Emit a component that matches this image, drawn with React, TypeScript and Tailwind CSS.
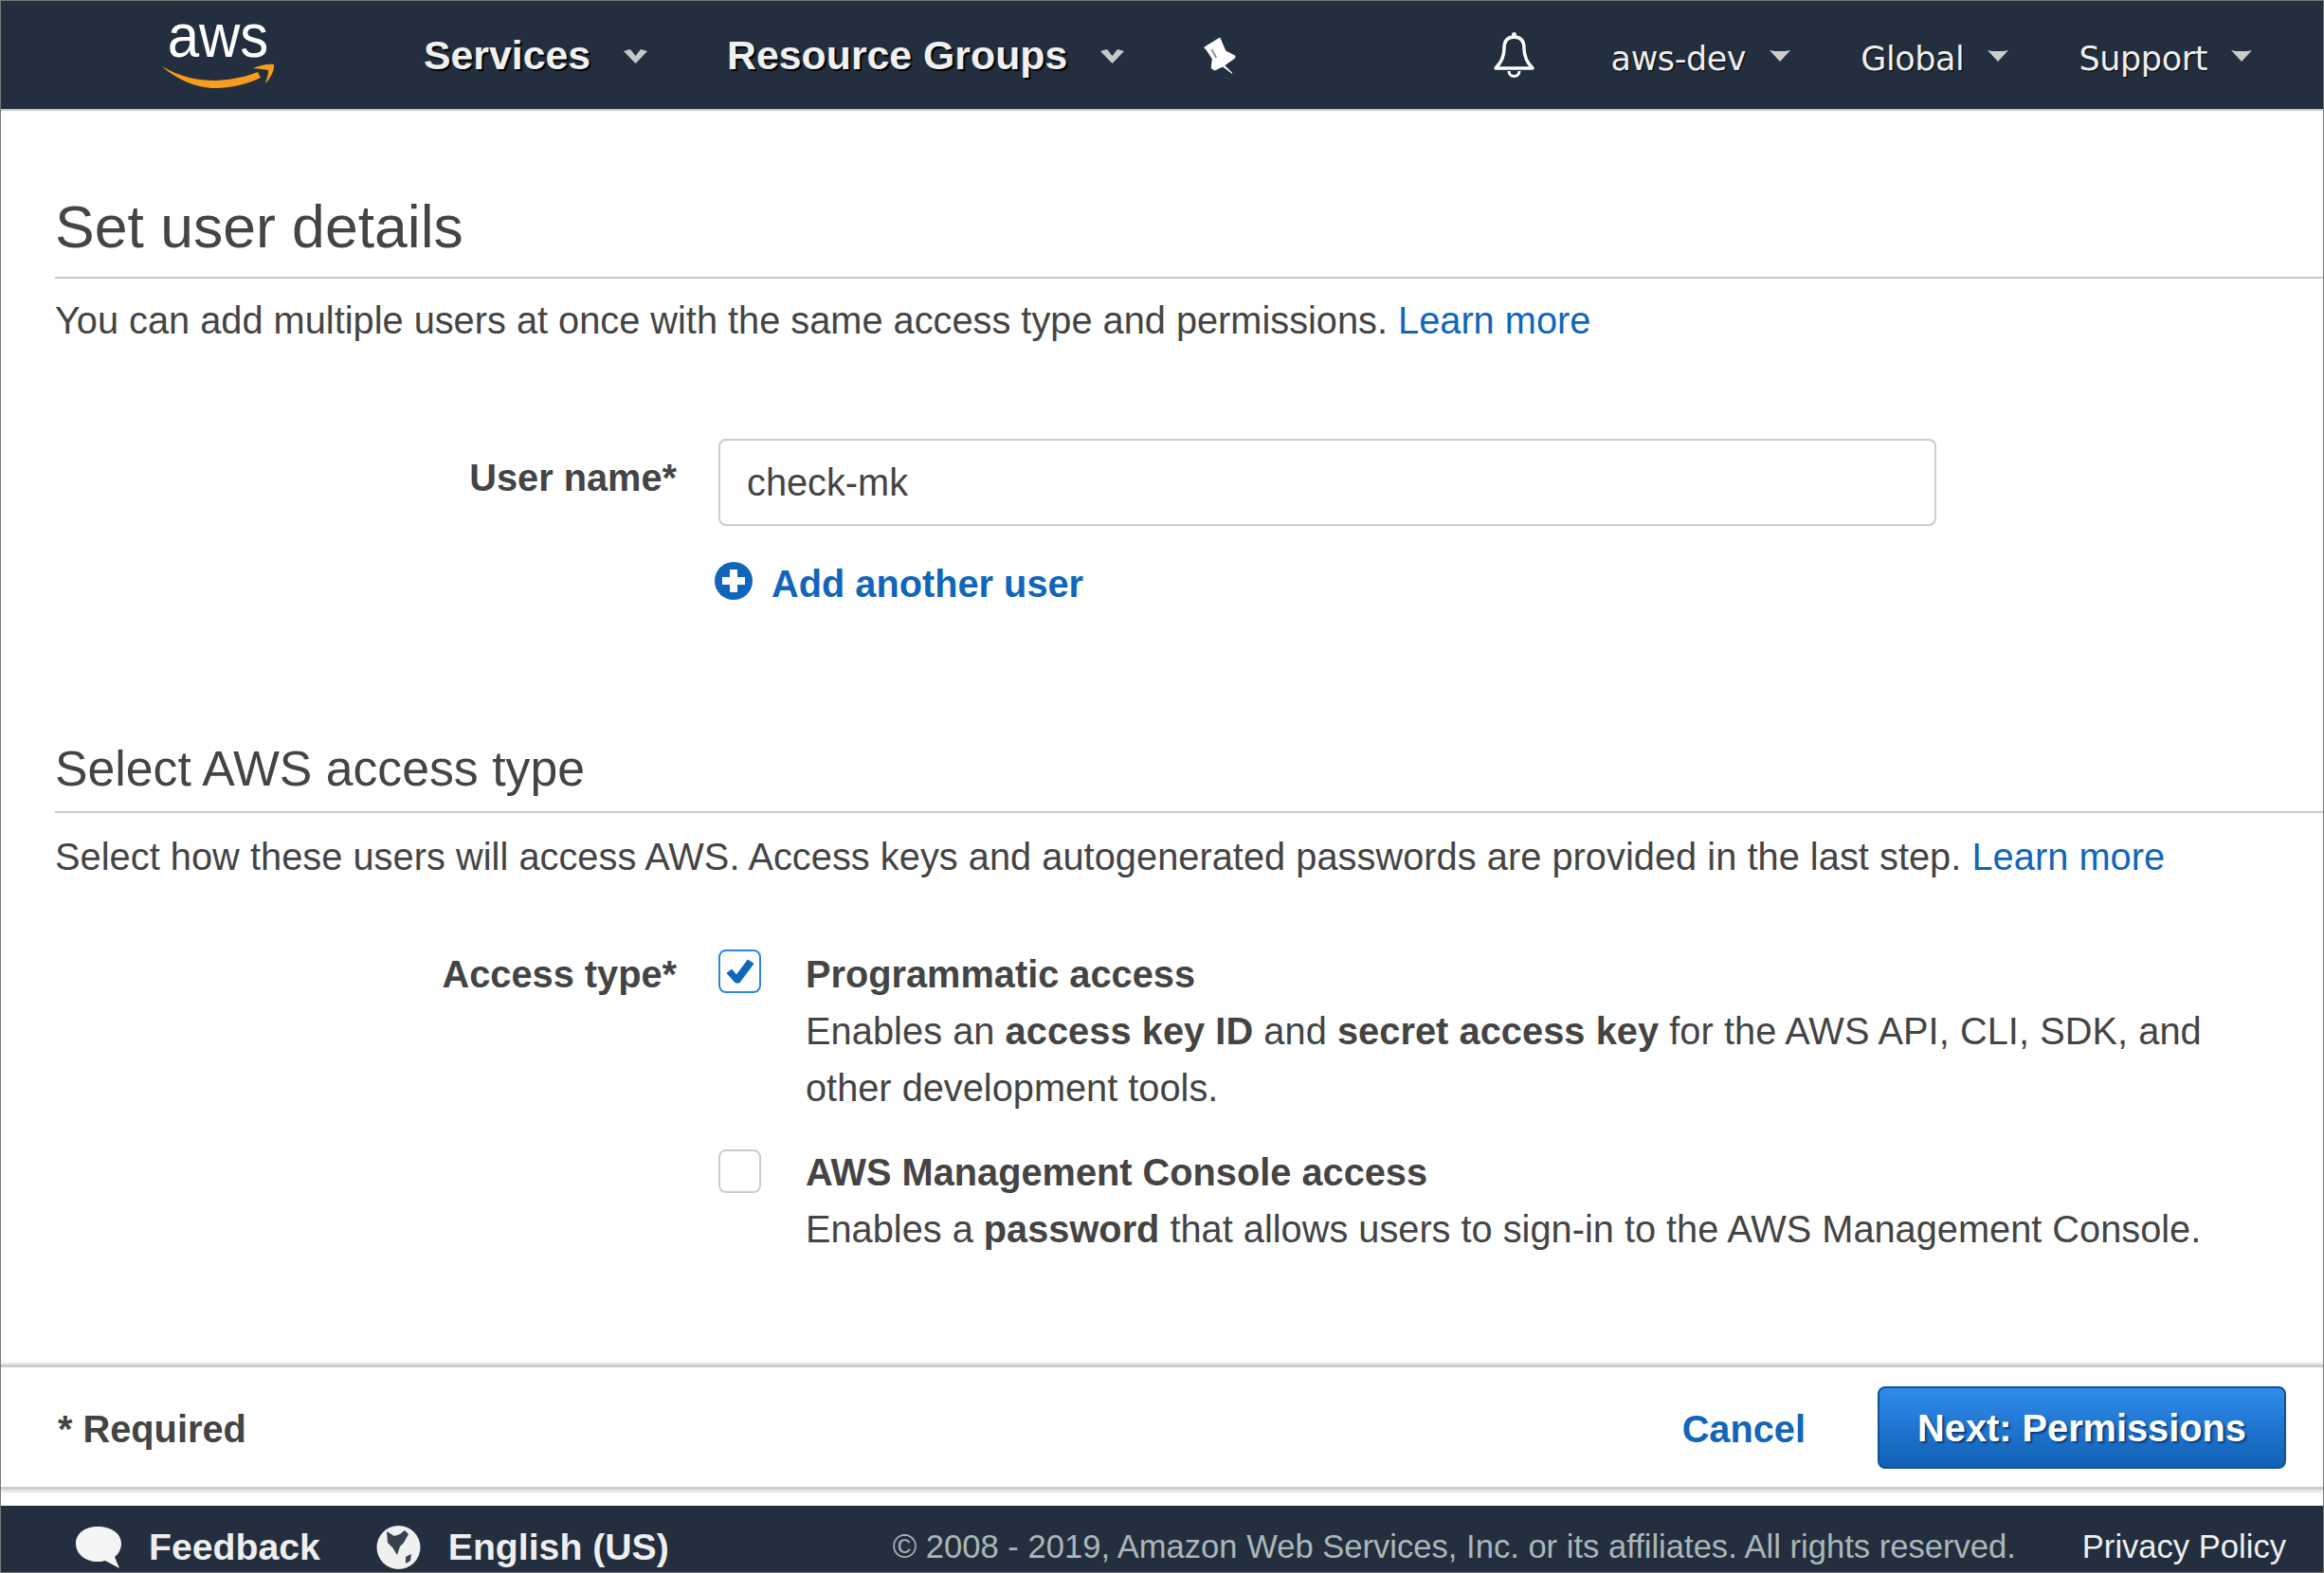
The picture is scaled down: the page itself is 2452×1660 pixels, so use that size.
import React from "react";

const NavTriangle = () => (
  <svg width="22" height="12" viewBox="0 0 22 12" className="ml-[25px] mt-[2px] shrink-0">
    <path d="M0 0l5 1h12l5-1-11 12z" fill="#ccc" />
  </svg>
);

const BoldCaret = () => (
  <svg width="25" height="15" viewBox="0 0 25 15" className="ml-[35px] mt-[3px] shrink-0">
    <path d="M0 2l7-2 5.5 7L18 0l7 2-12.5 13z" fill="#c4c8cc" />
  </svg>
);

const AwsLogo = () => (
  <div className="flex flex-col items-center w-[118px] shrink-0">
    <span className="-mt-[16px] -mb-[1px] text-[60px] leading-[60px] text-white scale-y-[1.09]">aws</span>
    <svg width="118" height="26" viewBox="0 0 118 26">
      <path d="M0 3C18 14 38 18 56 18C72 18 88 14 101 9L104 15C90 22 72 26 56 26C36 26 14 16 0 3Z" fill="#f79c1d" />
      <path d="M96 5C103 2 112 0 118 1C119 7 114 16 109 21C110 16 113 10 112 7C108 6 102 6 96 5Z" fill="#f79c1d" />
    </svg>
  </div>
);

const Checkbox = ({ checked }: { checked?: boolean }) => (
  <div
    className={
      checked
        ? "w-[45px] h-[46px] shrink-0 rounded-[8px] border-2 border-[#2e86e0] flex items-center justify-center"
        : "w-[45px] h-[46px] shrink-0 rounded-[8px] border-2 border-[#ccc]"
    }
  >
    {checked && (
      <svg width="30" height="26" viewBox="0 0 30 26">
        <path d="M1 15l5-4 5 6L23 1l6 4-15 20h-4z" fill="#1166bb" stroke="#1166bb" strokeLinejoin="round" />
      </svg>
    )}
  </div>
);

export default function App() {
  return (
    <div className="w-[2452px] h-[1660px] flex flex-col bg-white border-l border-r border-[#777] overflow-hidden text-[#444] font-['Liberation_Sans',sans-serif]">
      {/* top nav */}
      <div className="h-[117px] shrink-0 bg-[#232f3e] border-t border-t-[#777] border-b-2 border-b-[#ccc] flex items-center pl-[170px] pr-[75px]">
        <AwsLogo />
        <div className="ml-[158px] flex items-center text-[42.8px] font-bold text-[#f0f0f0] [text-shadow:2px_2px_1px_#000]">
          Services
          <BoldCaret />
        </div>
        <div className="ml-[84px] flex items-center text-[42.8px] font-bold text-[#f0f0f0] [text-shadow:2px_2px_1px_#000]">
          Resource Groups
          <BoldCaret />
        </div>
        <svg width="34" height="39" viewBox="0 0 34 39" className="ml-[84px] shrink-0">
          <path d="M0.7 11L17 1L19 5.7L23 15L33 20L32.7 22.3L21.7 30L30 38.3L20 31L11.7 35L8.3 33L9.3 23L3.3 14Z" fill="#fff" stroke="#fff" strokeLinejoin="round" />
          <path d="M8.3 13L13.3 22" stroke="#8c939b" strokeWidth="2" />
        </svg>
        <div className="ml-auto flex items-center text-[35px] text-[#eee] [text-shadow:1px_1px_1px_#000] font-['DejaVu_Sans',sans-serif] tracking-[-0.4px]">
          <svg width="45" height="50" viewBox="0 0 45 50" className="mr-[80px] shrink-0" fill="none" stroke="#fff" strokeWidth="3.5">
            <circle cx="22.5" cy="3.5" r="2.5" fill="#fff" stroke="none" />
            <path d="M22.5 6C15 6 12 11 12 18C12 28 8 34 3 39H42C37 34 33 28 33 18C33 11 30 6 22.5 6Z" strokeLinejoin="round" />
            <path d="M17 42a5.5 5.5 0 0 0 11 0" strokeWidth="3" />
          </svg>
          <span className="pt-[8px]">aws-dev</span>
          <NavTriangle />
          <span className="ml-[74px] pt-[8px]">Global</span>
          <NavTriangle />
          <span className="ml-[74px] pt-[8px]">Support</span>
          <NavTriangle />
        </div>
      </div>

      {/* main content */}
      <div className="flex-1 pl-[57px]">
        <h1 className="mt-[87px] text-[62.5px] leading-[70px] font-normal">Set user details</h1>
        <div className="mt-[18px] h-[2px] bg-[#ccc]" />
        <p className="mt-[21px] text-[39.75px] leading-[46px]">
          You can add multiple users at once with the same access type and permissions.{" "}
          <span className="text-[#1166bb]">Learn more</span>
        </p>

        <div className="mt-[102px] flex items-start">
          <label className="w-[656px] text-right text-[39.75px] font-bold leading-[46px] mt-[18px]">User name*</label>
          <div className="ml-[44px] w-[1285px] h-[92px] rounded-[8px] border-2 border-[#ccc] flex items-center pl-[28px] pt-[2px] text-[39.75px]">
            check-mk
          </div>
        </div>
        <div className="mt-[38px] ml-[696px] flex items-start text-[39.75px] font-bold leading-[46px] text-[#1166bb]">
          <svg width="40" height="40" viewBox="0 0 40 40" className="shrink-0">
            <circle cx="20" cy="20" r="20" fill="#1166bb" />
            <path d="M16 8h8v8h8v8h-8v8h-8v-8H8v-8h8z" fill="#fff" />
          </svg>
          <span className="ml-[20px]">Add another user</span>
        </div>

        <h2 className="mt-[142px] text-[51.75px] leading-[60px] font-normal">Select AWS access type</h2>
        <div className="mt-[15px] h-[2px] bg-[#ccc]" />
        <p className="mt-[23px] text-[39.75px] leading-[46px] tracking-[0.04px]">
          Select how these users will access AWS. Access keys and autogenerated passwords are provided in the last step.{" "}
          <span className="text-[#1166bb]">Learn more</span>
        </p>

        <div className="mt-[75px] flex items-start">
          <label className="w-[656px] text-right text-[39.75px] font-bold leading-[46px] mt-[3px]">Access type*</label>
          <div className="ml-[44px] flex flex-col">
            <div className="flex items-start">
              <Checkbox checked />
              <div className="ml-[47px] text-[39.75px] leading-[60px] w-[1520px] -mt-[4px]">
                <div className="font-bold">Programmatic access</div>
                <div className="tracking-[0.06px]">
                  Enables an <b>access key ID</b> and <b>secret access key</b> for the AWS API, CLI, SDK, and
                </div>
                <div>other development tools.</div>
              </div>
            </div>
            <div className="mt-[35px] flex items-start">
              <Checkbox />
              <div className="ml-[47px] text-[39.75px] leading-[60px] w-[1520px] -mt-[6px]">
                <div className="font-bold">AWS Management Console access</div>
                <div>
                  Enables a <b>password</b> that allows users to sign-in to the AWS Management Console.
                </div>
              </div>
            </div>
          </div>
        </div>
      </div>

      {/* action bar */}
      <div className="h-[132px] shrink-0 border-t-[3px] border-b-[3px] border-[#ccc] shadow-[0_-2px_3px_#e4e4e4,0_3px_3px_#e4e4e4] flex items-center pl-[60px] pr-[39px] mb-[17px]">
        <span className="text-[39.75px] font-bold pt-[6px]">* Required</span>
        <span className="ml-auto text-[39.75px] font-bold text-[#1166bb] pt-[6px]">Cancel</span>
        <button className="ml-[76px] w-[431px] h-[87px] pt-[4px] rounded-[8px] border-2 border-[#0f5298] bg-gradient-to-b from-[#2f8cec] to-[#1060b4] text-white text-[39.75px] font-bold [text-shadow:2px_2px_2px_#0a3c78]">
          Next: Permissions
        </button>
      </div>

      {/* footer */}
      <div className="h-[71px] shrink-0 bg-[#232f3e] border-b border-b-[#777] flex items-center pt-[18px] pl-[78px] pr-[39px] text-[39.2px]">
        <svg width="50" height="46" viewBox="0 0 50 46" className="shrink-0">
          <path d="M24 1c14 0 25 7 25 18 0 6-3 11-7 14l5 12-15-8c-3 1-5 1-8 1C11 38 1 30 1 19 1 8 11 1 24 1z" fill="#f4f4f4" />
        </svg>
        <span className="ml-[28px] font-bold text-[#eee]">Feedback</span>
        <svg width="47" height="46" viewBox="0 0 47 46" className="ml-[59px] shrink-0">
          <circle cx="23.5" cy="23" r="23" fill="#f0f0f0" />
          <path d="M11 6l8 5 6-2 5-4 4 4-5 9-4 4-3 9-5-8-5-5z" fill="#38424f" />
          <path d="M31 33l6-3-1 7-5 3z" fill="#38424f" />
        </svg>
        <span className="ml-[29px] font-bold text-[#eee]">English (US)</span>
        <span className="ml-auto text-[34.6px] text-[#aab7b8]">© 2008 - 2019, Amazon Web Services, Inc. or its affiliates. All rights reserved.</span>
        <span className="ml-[70px] text-[34.6px] text-[#eee]">Privacy Policy</span>
      </div>
    </div>
  );
}
